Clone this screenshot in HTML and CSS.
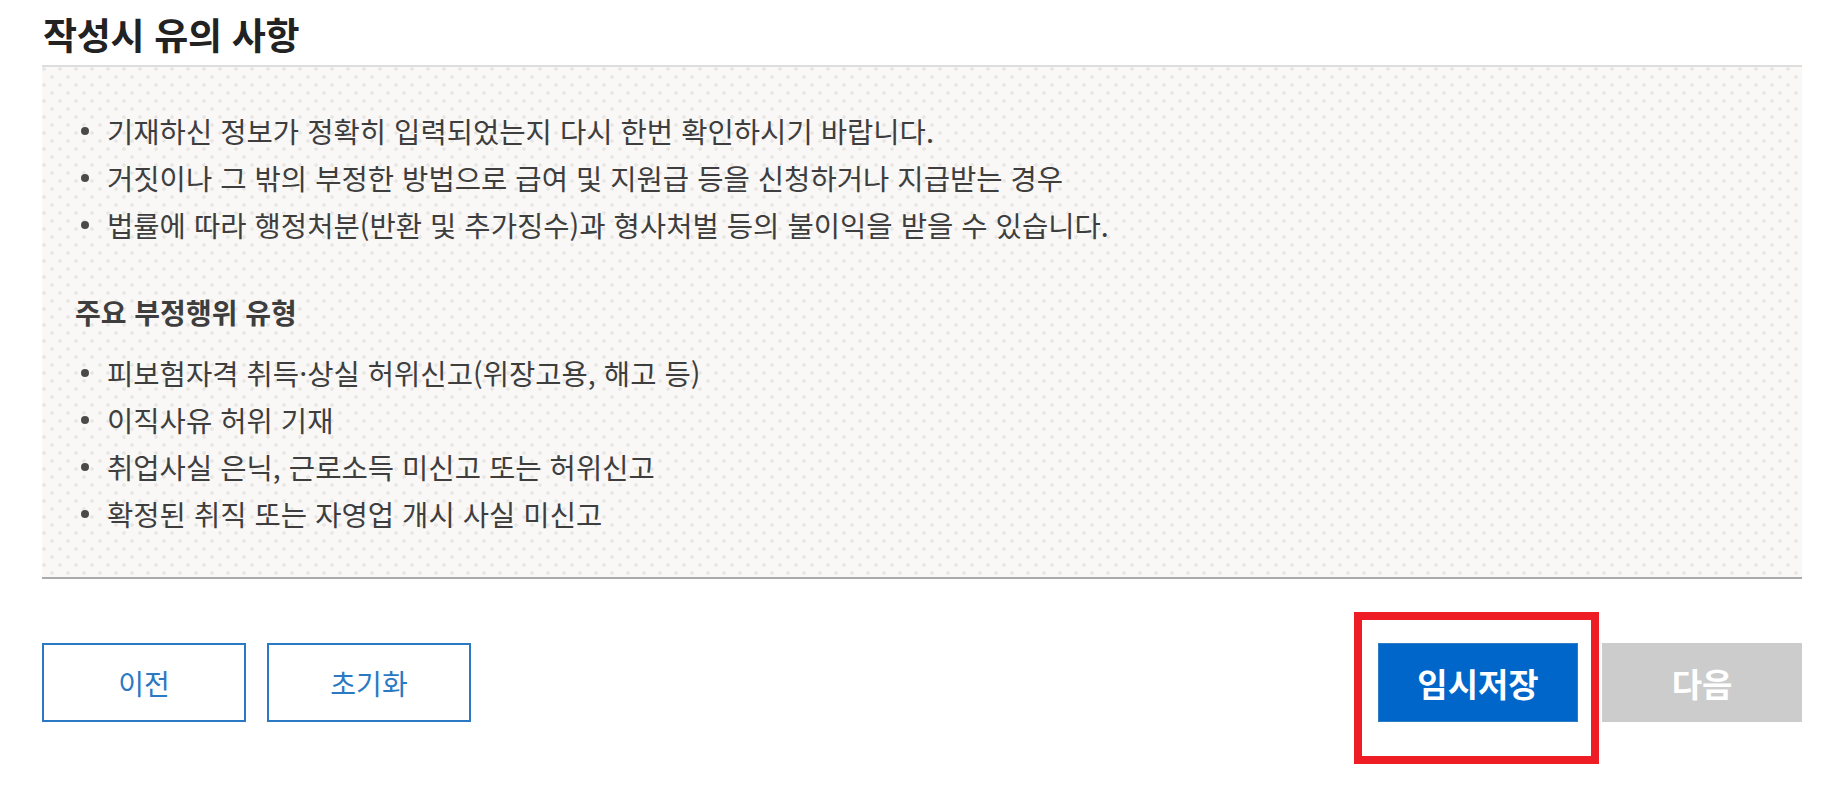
FILE: index.html
```html
<!DOCTYPE html>
<html lang="ko">
<head>
<meta charset="utf-8">
<title>작성시 유의 사항</title>
<link rel="stylesheet" href="styles.css">
</head>
<body>
<div class="page">
  <h2 class="title">작성시 유의 사항</h2>
  <div class="notice">
    <ul class="list">
      <li>기재하신 정보가 정확히 입력되었는지 다시 한번 확인하시기 바랍니다.</li>
      <li>거짓이나 그 밖의 부정한 방법으로 급여 및 지원급 등을 신청하거나 지급받는 경우</li>
      <li>법률에 따라 행정처분(반환 및 추가징수)과 형사처벌 등의 불이익을 받을 수 있습니다.</li>
    </ul>
    <h3 class="subhead">주요 부정행위 유형</h3>
    <ul class="list">
      <li>피보험자격 취득·상실 허위신고(위장고용, 해고 등)</li>
      <li>이직사유 허위 기재</li>
      <li>취업사실 은닉, 근로소득 미신고 또는 허위신고</li>
      <li>확정된 취직 또는 자영업 개시 사실 미신고</li>
    </ul>
  </div>
  <div class="actions">
    <div class="group group-left">
      <button class="btn btn-outline" type="button">이전</button>
      <button class="btn btn-outline" type="button">초기화</button>
    </div>
    <div class="group group-right">
      <div class="highlight">
        <button class="btn btn-primary" type="button">임시저장</button>
        <span class="annot"></span>
      </div>
      <button class="btn btn-disabled" type="button" disabled>다음</button>
    </div>
  </div>
</div>
</body>
</html>
```

FILE: styles.css
```css
* {
  box-sizing: border-box;
}

html, body {
  margin: 0;
  padding: 0;
  background: #ffffff;
}

html {
  height: 100%;
}

body {
  min-height: 100%;
  font-family: "Noto Sans CJK KR", "Noto Sans", sans-serif;
  color: #444444;
}

.page {
  min-height: 798px;
  padding: 0 35px 0 42px;
}

.title {
  margin: 9px 0 6px;
  padding-left: 1px;
  font-size: 37px;
  line-height: 50px;
  font-weight: 700;
  color: #222222;
  letter-spacing: -0.3px;
}

.notice {
  border-top: 2px solid #dddddd;
  border-bottom: 2px solid #aaaaaa;
  padding: 40px 33px 40px 33px;
  background-color: #f9f8f6;
  background-image:
    radial-gradient(circle at 2px 2px, #e9e7e4 1.5px, rgba(233, 231, 228, 0) 2px),
    radial-gradient(circle at 10px 10px, #e9e7e4 1.5px, rgba(233, 231, 228, 0) 2px);
  background-size: 16px 16px, 16px 16px;
}

.list {
  list-style: none;
  margin: 0;
  padding: 0;
}

.list li {
  display: flex;
  align-items: center;
  font-size: 28.6px;
  line-height: 47px;
  color: #3e3e3e;
}

.list li::before {
  content: "";
  flex: none;
  width: 8px;
  height: 8px;
  border-radius: 50%;
  background: #4a4a4a;
  margin: 0 18px 0 6px;
}

.subhead {
  margin: 41px 0 13px;
  font-size: 28px;
  line-height: 47px;
  font-weight: 700;
  color: #3e3e3e;
}

.actions {
  display: flex;
  justify-content: space-between;
  align-items: flex-start;
  margin-top: 64px;
}

.group {
  display: flex;
}

.group-left {
  gap: 21px;
}

.group-right {
  gap: 24px;
}

.highlight {
  position: relative;
  display: flex;
}

.btn {
  display: flex;
  align-items: center;
  justify-content: center;
  height: 79px;
  padding: 0;
  margin: 0;
  font-family: "Noto Sans CJK KR", "Noto Sans", sans-serif;
  cursor: pointer;
}

.btn-outline {
  width: 204px;
  background: #ffffff;
  border: 2px solid #2b79c2;
  color: #2b79c2;
  font-size: 28px;
  font-weight: 400;
}

.btn-primary {
  width: 200px;
  background: #0066c9;
  border: 1px solid #2d7cc4;
  color: #ffffff;
  font-size: 33px;
  font-weight: 700;
}

.btn-disabled {
  width: 200px;
  background: #cccccc;
  border: 0;
  color: #ffffff;
  font-size: 33px;
  font-weight: 700;
  cursor: default;
}

.annot {
  position: absolute;
  left: -24px;
  right: -21px;
  top: -31px;
  bottom: -42px;
  border: 8px solid #ee1c25;
  pointer-events: none;
}
```
